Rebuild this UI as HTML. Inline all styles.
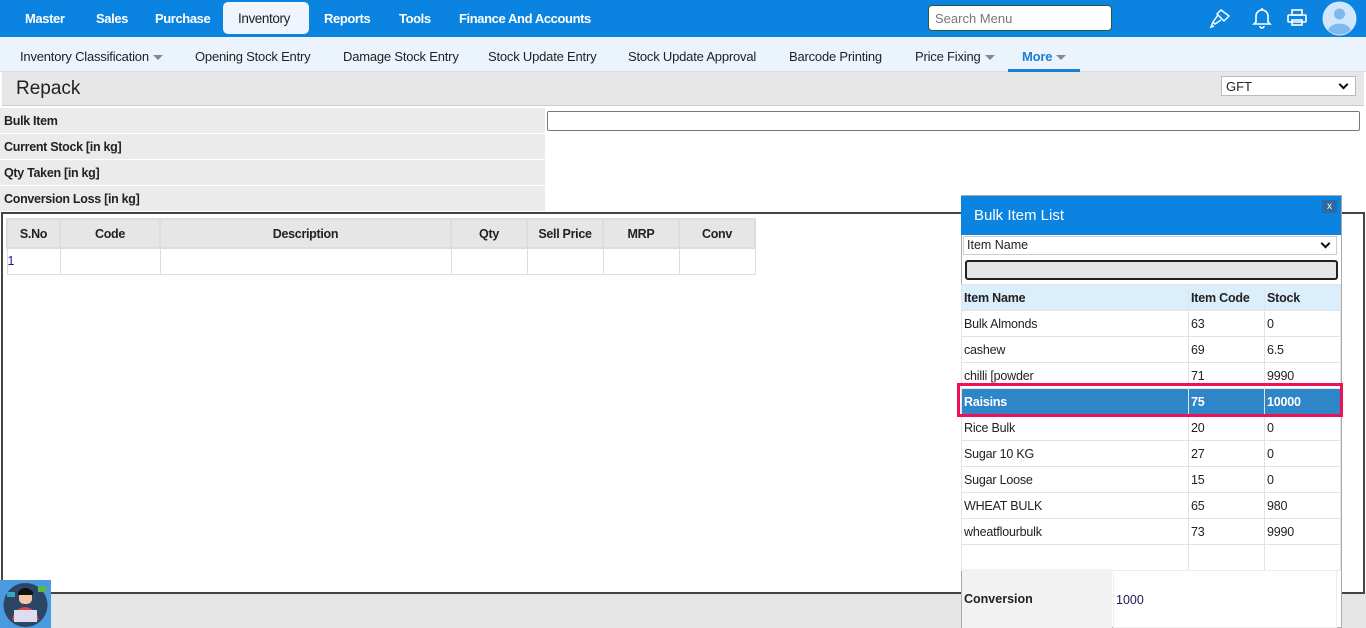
<!DOCTYPE html>
<html><head><style>
*{box-sizing:border-box;margin:0;padding:0}
body{width:1366px;height:628px;overflow:hidden;font-family:"Liberation Sans",sans-serif;background:#fff;position:relative;font-size:13px;color:#222}
.a{position:absolute}
.top{left:0;top:0;width:1366px;height:37px;background:#0a84e0}
.nav{color:#fff;font-weight:bold;font-size:13px;top:11px;letter-spacing:-0.4px}
.sub{left:0;top:37px;width:1366px;height:35px;background:#ebf4fc;border-bottom:1px solid #d6dde4}
.si{top:49px;font-size:13px;color:#222;letter-spacing:-0.2px}
.car{display:inline-block;width:0;height:0;border-left:5px solid transparent;border-right:5px solid transparent;border-top:5px solid #888;vertical-align:middle;margin-left:4px}
.lab{left:0;width:545px;height:25px;background:#ebebeb;font-weight:bold;font-size:12.5px;padding:6px 4px;letter-spacing:-0.3px}
table{border-collapse:collapse}
.g td{border:1px solid #ddd;height:26px;font-size:12.5px}
.g th{background:#e6e6e6;border:2px solid #ddd;height:29px;font-size:12.5px;letter-spacing:-0.3px}
.p td{border:1px solid #e3e3e3;height:26px;font-size:12.5px;padding-left:2px;letter-spacing:-0.2px}
.chev{float:right;width:7px;height:7px;border-right:2px solid #111;border-bottom:2px solid #111;transform:rotate(45deg);margin:2px 4px 0 0}
</style></head><body>
<div class="a top"></div>
<div class="a nav" style="left:25px">Master</div>
<div class="a nav" style="left:96px">Sales</div>
<div class="a nav" style="left:155px">Purchase</div>
<div class="a" style="left:223px;top:2px;width:86px;height:32px;background:#eef5fc;border-radius:5px"></div>
<div class="a nav" style="left:238px;color:#222;font-weight:normal;font-size:13.5px">Inventory</div>
<div class="a nav" style="left:324px">Reports</div>
<div class="a nav" style="left:399px">Tools</div>
<div class="a nav" style="left:459px">Finance And Accounts</div>
<div class="a" style="left:928px;top:5px;width:184px;height:26px;background:#fff;border:1px solid #2a5a3a;border-radius:4px;color:#777;font-size:13px;padding:5px 6px">Search Menu</div>
<svg class="a" style="left:1209px;top:7px" width="24" height="22" viewBox="0 0 24 22" fill="none" stroke="#fff" stroke-width="1.5"><path d="M12 3l8 6-5 5-7-7z M9 8l-5 7 2 2 6-4 M4 15l-2 5 3-1"/></svg>
<svg class="a" style="left:1252px;top:6px" width="20" height="24" viewBox="0 0 20 24" fill="none" stroke="#fff" stroke-width="1.6"><path d="M10 2v2 M4 16V10a6 6 0 0112 0v6l2 2H2z M8 20a2 2 0 004 0"/></svg>
<svg class="a" style="left:1287px;top:9px" width="20" height="18" viewBox="0 0 20 18" fill="none" stroke="#fff" stroke-width="1.6"><rect x="5" y="1" width="10" height="5"/><rect x="1" y="6" width="18" height="7" rx="1"/><rect x="5" y="11" width="10" height="5"/></svg>
<svg class="a" style="left:1322px;top:1px" width="35" height="35" viewBox="0 0 35 35"><circle cx="17.5" cy="17.5" r="17" fill="#cfe6fb"/><circle cx="17.5" cy="13" r="5.5" fill="#7eb8ee"/><path d="M6 29a12 9 0 0123 0a17 17 0 01-23 0z" fill="#7eb8ee"/></svg>
<div class="a sub"></div>
<div class="a si" style="left:20px">Inventory Classification<span class="car"></span></div>
<div class="a si" style="left:195px">Opening Stock Entry</div>
<div class="a si" style="left:343px">Damage Stock Entry</div>
<div class="a si" style="left:488px">Stock Update Entry</div>
<div class="a si" style="left:628px">Stock Update Approval</div>
<div class="a si" style="left:789px">Barcode Printing</div>
<div class="a si" style="left:915px">Price Fixing<span class="car"></span></div>
<div class="a si" style="left:1022px;color:#1a7fd6;font-weight:bold">More<span class="car"></span></div>
<div class="a" style="left:1008px;top:69px;width:72px;height:3px;background:#1a7fd6"></div>
<div class="a" style="left:2px;top:72px;width:1362px;height:34px;background:#e7e7e7;border-bottom:1px solid #ccc"></div>
<div class="a" style="left:16px;top:78px;font-size:19px;color:#222">Repack</div>
<div class="a" style="left:1221px;top:76px;width:135px;height:20px;background:#fff;border:1px solid #bbb;font-size:13px;padding:2px 4px">GFT<span class="chev"></span></div>
<div class="a lab" style="top:108px">Bulk Item</div>
<div class="a lab" style="top:134px">Current Stock [in kg]</div>
<div class="a lab" style="top:160px">Qty Taken [in kg]</div>
<div class="a lab" style="top:186px">Conversion Loss [in kg]</div>
<div class="a" style="left:547px;top:111px;width:813px;height:20px;border:1px solid #777;border-radius:2px"></div>
<div class="a" style="left:0;top:592px;width:1366px;height:36px;background:#e6e6e6"></div>
<div class="a" style="left:1px;top:212px;width:1364px;height:382px;border:2px solid #444"></div>
<table class="a g" style="left:6px;top:218px;width:750px">
<tr><th style="width:53px">S.No</th><th style="width:100px">Code</th><th>Description</th><th style="width:76px">Qty</th><th style="width:76px">Sell Price</th><th style="width:76px">MRP</th><th style="width:76px">Conv</th></tr>
<tr><td style="color:#1a1a9a">1</td><td></td><td></td><td></td><td></td><td></td><td></td></tr></table>
<div class="a" style="left:961px;top:195px;width:381px;height:433px;background:#fff;border:1px solid #aaa"></div>
<div class="a" style="left:961px;top:196px;width:380px;height:39px;background:#0a84e0;color:#fff;font-size:15px;padding:11px 13px">Bulk Item List</div>
<div class="a" style="left:1322px;top:200px;width:15px;height:13px;background:#2d6aa0;color:#fff;font-size:10px;text-align:center;line-height:13px">x</div>
<div class="a" style="left:963px;top:236px;width:374px;height:19px;border:1px solid #ccc;font-size:12.5px;padding:1px 3px">Item Name<span class="chev"></span></div>
<div class="a" style="left:965px;top:260px;width:373px;height:20px;background:#e6e6e6;border:2px solid #222;border-radius:3px"></div>
<table class="a p" style="left:961px;top:284px;width:380px">
<tr style="background:#dbeefc;font-weight:bold"><td style="width:227px;height:24px">Item Name</td><td style="width:76px">Item Code</td><td>Stock</td></tr>
<tr><td>Bulk Almonds</td><td>63</td><td>0</td></tr>
<tr><td>cashew</td><td>69</td><td>6.5</td></tr>
<tr><td>chilli [powder</td><td>71</td><td>9990</td></tr>
<tr style="background:#2e86c8;color:#fff;font-weight:bold"><td>Raisins</td><td>75</td><td>10000</td></tr>
<tr><td>Rice Bulk</td><td>20</td><td>0</td></tr>
<tr><td>Sugar 10 KG</td><td>27</td><td>0</td></tr>
<tr><td>Sugar Loose</td><td>15</td><td>0</td></tr>
<tr><td>WHEAT BULK</td><td>65</td><td>980</td></tr>
<tr><td>wheatflourbulk</td><td>73</td><td>9990</td></tr>
<tr><td></td><td></td><td></td></tr></table>
<div class="a" style="left:957px;top:383px;width:386px;height:34px;border:3px solid #ee1155"></div>
<div class="a" style="left:962px;top:569px;width:150px;height:59px;background:#f2f2f2;font-weight:bold;font-size:12.5px;padding:23px 2px">Conversion</div>
<div class="a" style="left:1113px;top:570px;width:224px;height:58px;background:#fff;border:1px solid #eee;font-size:12.5px;padding:22px 2px;color:#1a1a5a">1000</div>
<div class="a" style="left:0;top:580px;width:51px;height:48px;background:#4a9ae0"></div>
<svg class="a" style="left:2px;top:582px" width="47" height="46" viewBox="0 0 47 46"><circle cx="23.5" cy="23" r="22" fill="#2c4565"/><rect x="17" y="8" width="13" height="14" rx="5" fill="#f1c9a5"/><path d="M16 10q7-8 15 0v3H16z" fill="#111"/><path d="M10 38q2-12 13-13 11 1 14 13z" fill="#d94848"/><rect x="12" y="28" width="23" height="12" fill="#dde"/><rect x="5" y="10" width="8" height="5" fill="#3aa5c8"/><rect x="36" y="4" width="8" height="6" fill="#5ab84a"/></svg>
</body></html>
